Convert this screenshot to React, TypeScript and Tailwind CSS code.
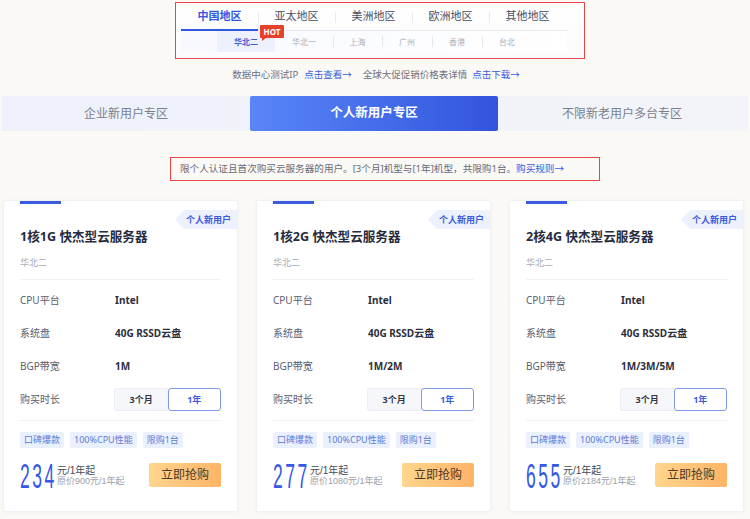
import { type FC } from "react";

const regions = ["中国地区", "亚太地区", "美洲地区", "欧洲地区", "其他地区"];
const zones = [
  { name: "华北二", w: "w-[58px]" },
  { name: "华北一", w: "w-[58px]" },
  { name: "上海", w: "w-[49px]" },
  { name: "广州", w: "w-[50px]" },
  { name: "香港", w: "w-[50px]" },
  { name: "台北", w: "w-[50px]" },
];

const plans = [
  { title: "1核1G 快杰型云服务器", bw: "1M", price: "234", orig: "原价900元/1年起" },
  { title: "1核2G 快杰型云服务器", bw: "1M/2M", price: "277", orig: "原价1080元/1年起" },
  { title: "2核4G 快杰型云服务器", bw: "1M/3M/5M", price: "655", orig: "原价2184元/1年起" },
];

const tags = ["口碑爆款", "100%CPU性能", "限购1台"];

const Row: FC<{ label: string; children: React.ReactNode }> = ({ label, children }) => (
  <div className="flex h-[33px] items-center">
    <span className="w-[95px] text-[10px] text-[#5b6070]">{label}</span>
    {children}
  </div>
);

const PlanCard: FC<(typeof plans)[number]> = ({ title, bw, price, orig }) => (
  <div className="relative h-[312px] w-[235px] rounded-[2px] border border-[#f1f1f3] bg-white px-4 shadow-[0_1px_4px_rgba(0,0,0,0.03)]">
    <div className="h-[3px] w-[41px] bg-[#3a5be0]" />
    <div className="absolute right-0 top-[9px] flex h-[19px] w-[62px] items-center justify-end bg-[#ecf1fd] pr-[6px] text-[9px] font-bold text-[#3a5be0] [clip-path:polygon(9px_0,100%_0,100%_100%,9px_100%,0_50%)]">
      个人新用户
    </div>
    <h3 className="mt-[23px] text-[12.6px] font-bold leading-[20px] text-[#262b40]">{title}</h3>
    <p className="mt-[9px] text-[9px] leading-[14px] text-[#a9adb6]">华北二</p>
    <div className="mt-[9px] h-px bg-[#eff1f5]" />
    <div className="mt-[4px]">
      <Row label="CPU平台">
        <span className="text-[10px] font-bold text-[#2b2f3d]">Intel</span>
      </Row>
      <Row label="系统盘">
        <span className="text-[10px] font-bold text-[#2b2f3d]">40G RSSD云盘</span>
      </Row>
      <Row label="BGP带宽">
        <span className="text-[10px] font-bold text-[#2b2f3d]">{bw}</span>
      </Row>
      <Row label="购买时长">
        <div className="flex h-[23px] w-[109px] text-[9px] font-bold">
          <span className="flex w-[54px] items-center justify-center rounded-l-[3px] border border-r-0 border-[#eceef3] bg-[#f6f7fa] text-[#333846]">
            3个月
          </span>
          <span className="flex flex-1 items-center justify-center rounded-[3px] border border-[#8099ea] bg-white text-[#3a5be0]">
            1年
          </span>
        </div>
      </Row>
    </div>
    <div className="mt-[4px] h-px bg-[#eff1f5]" />
    <div className="mt-[11px] flex gap-[6px]">
      {tags.map((t) => (
        <span key={t} className="h-[16px] rounded-[2px] bg-[#eaf0fd] px-[4px] text-[9px] leading-[16px] text-[#5a7bd9]">
          {t}
        </span>
      ))}
    </div>
    <div className="mt-[15px] flex items-start justify-between">
      <div className="flex items-start">
        {/* condensed price digits */}
        <span className="inline-block h-[25px] w-[37px] overflow-visible">
          <span className="inline-block origin-left font-['Liberation_Sans',sans-serif] text-[35px] leading-[25px] tracking-[5px] text-[#3558e6] [transform:scaleX(0.5)]">
            {price}
          </span>
        </span>
        <div className="pt-[2px] font-['Liberation_Sans','Noto_Sans_CJK_SC',sans-serif]">
          <p className="text-[10px] leading-[11px] text-[#444955]">元/1年起</p>
          <p className="text-[9px] leading-[11px] text-[#9a9ea8]">{orig}</p>
        </div>
      </div>
      <button className="h-[24px] w-[72px] rounded-[2px] bg-gradient-to-r from-[#ffd58e] to-[#ffb466] text-[12px] text-[#4a3a28]">
        立即抢购
      </button>
    </div>
  </div>
);

export default function App() {
  return (
    <div className="h-[519px] w-[750px] overflow-hidden bg-[#fbf9f6] font-['Noto_Sans','Noto_Sans_CJK_SC',sans-serif]">
      {/* region picker */}
      <div className="relative ml-[175px] mt-[2px] h-[57px] w-[410px] border-[1.5px] border-[#e8444a] bg-gradient-to-b from-white to-[#fbfbfd] pl-[5px]">
        <div className="flex h-[28px] w-[386px] border-b border-[#e8eaf0]">
          {regions.map((r, i) => (
            <div key={r} className="relative flex w-[77px] items-center justify-center">
              <span className={i === 0 ? "text-[11px] font-bold text-[#3157e0]" : "text-[11px] text-[#474d60]"}>{r}</span>
              {i > 0 && <span className="absolute left-0 top-[9px] h-[11px] w-px bg-[#e8eaf0]" />}
              {i === 0 && <span className="absolute -bottom-px left-0 h-[2px] w-full bg-[#3157e0]" />}
            </div>
          ))}
        </div>
        <div className="flex h-[21px] w-[386px] bg-gradient-to-r from-[#f7f9fe] to-white pl-[36px]">
          {zones.map((z, i) => (
            <div
              key={z.name}
              className={`relative flex items-center justify-center text-[8px] ${z.w} ${
                i === 0 ? "bg-[#edf1fd] font-bold text-[#3d5fd9]" : "text-[#a9aeb9]"
              }`}
            >
              {z.name}
              {i > 1 && <span className="absolute left-0 top-[5px] h-[11px] w-px bg-[#e6e8ee]" />}
            </div>
          ))}
        </div>
        <span className="absolute left-[84px] top-[22px] flex h-[13px] w-[24px] items-center justify-center rounded-[1px] bg-[#e8402a] text-[8px] font-bold leading-none text-white">
          HOT
          <span className="absolute -bottom-[3px] left-[2px] h-0 w-0 border-r-[4px] border-t-[3px] border-r-transparent border-t-[#e8402a]" />
        </span>
      </div>

      {/* links */}
      <div className="mt-[9px] flex justify-center pl-[2px] text-[9.5px] leading-[14px]">
        <span className="text-[#6b7080]">数据中心测试IP</span>
        <span className="ml-[6px] text-[#3a5be0]">点击查看→</span>
        <span className="ml-[11px] text-[#6b7080]">全球大促促销价格表详情</span>
        <span className="ml-[5px] text-[#3a5be0]">点击下载→</span>
      </div>

      {/* user type tabs */}
      <div className="mx-[2px] mt-[14px] flex h-[35px] bg-gradient-to-r from-[#eef1fb] via-[#f1f3fa] to-[#f3f4f8]">
        <div className="flex w-[248px] items-center justify-center text-[12px] text-[#7a7f8c]">企业新用户专区</div>
        <div className="flex w-[248px] items-center justify-center rounded-[2px] bg-gradient-to-r from-[#5a85f8] to-[#3354dd] text-[12.5px] font-bold text-white">
          个人新用户专区
        </div>
        <div className="flex w-[248px] items-center justify-center text-[12px] text-[#7a7f8c]">不限新老用户多台专区</div>
      </div>

      {/* notice */}
      <div className="ml-[170px] mt-[26px] flex h-[24px] w-[430px] items-center border-[1.5px] border-[#e8444a] px-[9px] text-[9.6px] text-[#666b78]">
        限个人认证且首次购买云服务器的用户。[3个月]机型与[1年]机型，共限购1台。
        <span className="text-[#3a5be0]">购买规则→</span>
      </div>

      {/* plans */}
      <div className="mt-[19px] flex gap-[18px] pl-[3px]">
        {plans.map((p) => (
          <PlanCard key={p.price} {...p} />
        ))}
      </div>
    </div>
  );
}
